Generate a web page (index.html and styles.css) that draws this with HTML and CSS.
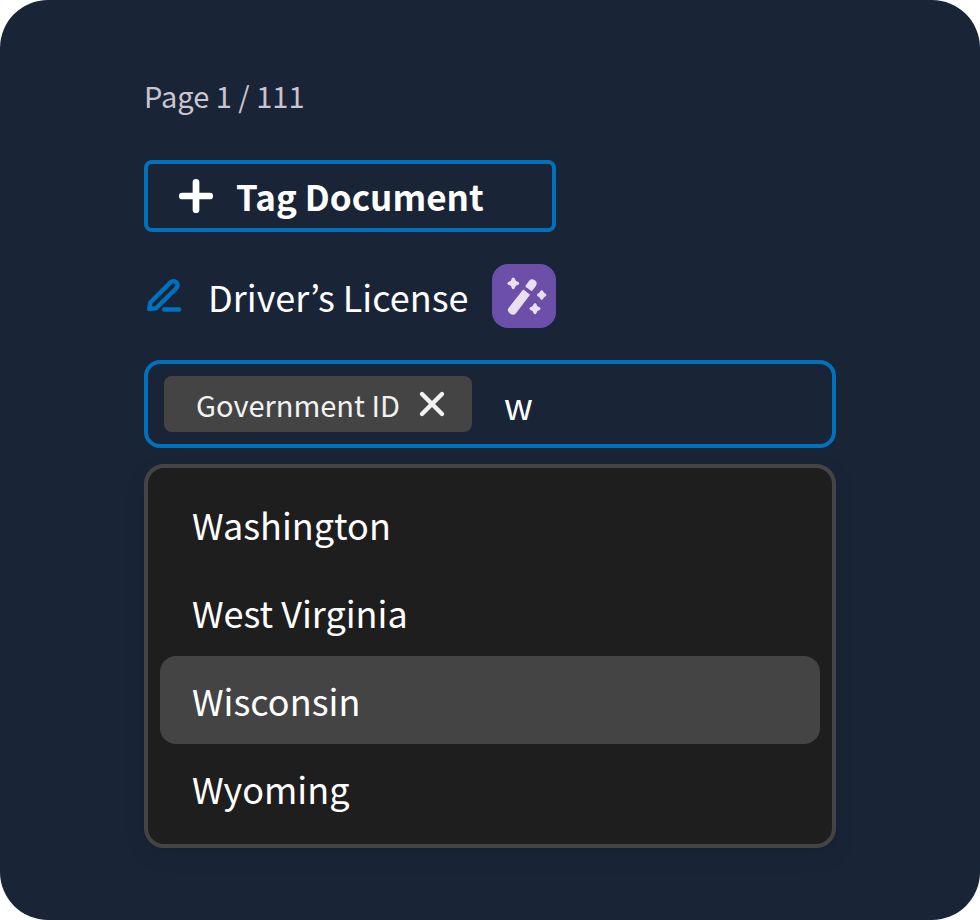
FILE: index.html
```html
<!DOCTYPE html>
<html lang="en">
<head>
<meta charset="utf-8">
<meta name="viewport" content="width=device-width, initial-scale=1">
<title>Tag Document</title>
<link rel="stylesheet" href="styles.css">
</head>
<body>
<main class="panel">
  <p class="page-count">Page 1 / 111</p>

  <div class="actions">
    <button class="tag-button" type="button">
      <svg class="icon" viewBox="0 0 40 40" aria-hidden="true">
        <path d="M20 6.25V33.75M6.25 20H33.75" fill="none" stroke="currentColor" stroke-width="6.7" stroke-linecap="round"/>
      </svg>
      <span>Tag Document</span>
    </button>

    <div class="document">
      <button class="edit-button" type="button" aria-label="Edit">
        <svg class="icon" viewBox="0 0 40 40" aria-hidden="true">
          <path d="M5.2 33L6.4 26.5L26.5 6.4A4.1 4.1 0 0 1 32.3 12.2L12.2 32.1Z" fill="none" stroke="currentColor" stroke-width="4.4" stroke-linejoin="round"/>
          <path d="M20.2 33.5H35.2" stroke="currentColor" stroke-width="4.4" stroke-linecap="round"/>
        </svg>
      </button>
      <span class="document-name">Driver’s License</span>
      <button class="magic-button" type="button" aria-label="Auto tag">
        <svg class="magic-icon" viewBox="0 0 64 64" fill="currentColor" stroke="currentColor" stroke-linejoin="round" aria-hidden="true">
          <path d="M31.3 26.4L37 30.8L23.2 49Q21.2 51 18.4 48.8Q15.6 46.6 17.2 44.6Z" stroke-width="1.6"/>
          <path d="M34.2 22.3L37.8 17.2Q39.8 15 42.4 16.9Q44.8 18.8 43.4 21.2L39.6 26.2Z" stroke-width="1.6"/>
          <path d="M21.3 15L22.7 17.9L25.6 19.3L22.7 20.7L21.3 23.6L19.9 20.7L17 19.3L19.9 17.9Z" stroke-width="3"/>
          <path d="M49.7 27.8L50.9 29.8L52.9 31L50.9 32.2L49.7 34.2L48.5 32.2L46.5 31L48.5 29.8Z" stroke-width="3"/>
          <path d="M43 40.7L44.3 43.4L47 44.7L44.3 46L43 48.7L41.7 46L39 44.7L41.7 43.4Z" stroke-width="3"/>
        </svg>
      </button>
    </div>
  </div>

  <div class="tag-field">
    <span class="chip">
      Government ID
      <button class="chip-remove" type="button" aria-label="Remove Government ID">
        <svg class="remove-icon" viewBox="0 0 32 32" aria-hidden="true">
          <path d="M6 6L26 26M26 6L6 26" fill="none" stroke="currentColor" stroke-width="4.4" stroke-linecap="round"/>
        </svg>
      </button>
    </span>
    <input class="tag-input" type="text" value="w" aria-label="Tag" role="combobox" aria-expanded="true" aria-controls="tag-options" autocomplete="off">
  </div>

  <ul class="options" id="tag-options" role="listbox" aria-label="Tags">
    <li class="option" role="option" aria-selected="false">Washington</li>
    <li class="option" role="option" aria-selected="false">West Virginia</li>
    <li class="option option-active" role="option" aria-selected="true">Wisconsin</li>
    <li class="option" role="option" aria-selected="false">Wyoming</li>
  </ul>
</main>
</body>
</html>
```
FILE: styles.css
```css
:root {
  --navy: #192537;
  --blue: #0071bc;
  --grey: #444444;
  --dark: #1e1e1e;
}

* {
  box-sizing: border-box;
}

body {
  margin: 0;
  background: #ffffff;
  color: #ffffff;
  font-family: "Noto Sans CJK JP", "Noto Sans", sans-serif;
  font-size: 36px;
  line-height: 56px;
}

button {
  display: flex;
  align-items: center;
  margin: 0;
  padding: 0;
  border: 0;
  background: none;
  color: inherit;
  font: inherit;
  cursor: pointer;
}

.panel {
  min-height: 100vh;
  padding: 76px 144px 72px;
  border-radius: 48px;
  background: var(--navy);
}

.page-count {
  margin: 0 0 46px;
  color: #cac4d0;
  font-size: 29px;
  line-height: 38px;
}

.actions {
  display: grid;
  gap: 32px;
  max-width: 412px;
  margin-bottom: 32px;
}

.icon {
  display: block;
  width: 40px;
  height: 40px;
}

.tag-button {
  gap: 20px;
  padding: 4px 28px;
  border: 4px solid var(--blue);
  border-radius: 8px;
  font-size: 35px;
  font-weight: 700;
}

.document {
  display: flex;
  align-items: center;
  gap: 24px;
}

.edit-button {
  color: var(--blue);
}

.document-name {
  white-space: nowrap;
}

.magic-button {
  margin-left: auto;
  border-radius: 16px;
  background: #6b4fa9;
  color: #e8e0f0;
}

.magic-icon {
  display: block;
  width: 64px;
  height: 64px;
}

.tag-field {
  display: flex;
  align-items: center;
  gap: 32px;
  margin-bottom: 16px;
  padding: 12px 16px;
  border: 4px solid var(--blue);
  border-radius: 16px;
}

.chip {
  display: flex;
  flex: none;
  align-items: center;
  gap: 16px;
  padding: 0 24px 0 32px;
  border-radius: 8px;
  background: var(--grey);
  color: #f2f2f2;
  font-size: 29px;
  white-space: nowrap;
}

.remove-icon {
  display: block;
  width: 32px;
  height: 32px;
}

.tag-input {
  flex: 1;
  min-width: 0;
  height: 56px;
  padding: 0;
  border: 0;
  outline: 0;
  background: none;
  color: inherit;
  font: inherit;
}

.options {
  margin: 0;
  padding: 12px;
  border: 4px solid var(--grey);
  border-radius: 20px;
  background: var(--dark);
  box-shadow: 0 8px 16px rgba(20, 28, 50, 0.4);
  list-style: none;
}

.option {
  padding: 16px 32px;
  border-radius: 16px;
}

.option-active {
  background: var(--grey);
}
```
